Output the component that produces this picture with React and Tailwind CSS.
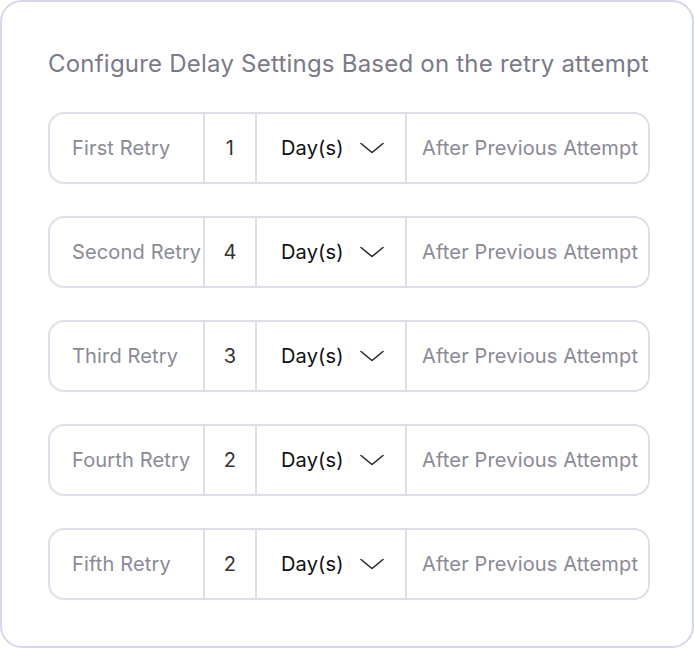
import React from "react";

const retries = [
  { label: "First Retry", value: 1 },
  { label: "Second Retry", value: 4 },
  { label: "Third Retry", value: 3 },
  { label: "Fourth Retry", value: 2 },
  { label: "Fifth Retry", value: 2 },
];

function Chevron() {
  return (
    <svg width="24" height="12" viewBox="0 0 24 12" fill="none">
      <path d="M1 1.5L12 10.5L23 1.5" stroke="#222" strokeWidth="1.5" strokeLinecap="round" strokeLinejoin="round" />
    </svg>
  );
}

export default function App() {
  return (
    <div className="w-[694px] h-[648px] bg-white" style={{ fontFamily: "Inter, 'Noto Sans', sans-serif" }}>
      <div className="w-full h-full border-2 border-[#d6d6f0] rounded-[22px] px-[46px] pt-[46px]">
        <h2 className="text-[24px] leading-[32px] text-[#7a7a88] tracking-[0.22px] whitespace-nowrap">
          Configure Delay Settings Based on the retry attempt
        </h2>
        <div className="mt-[32px] flex flex-col gap-[32px]">
          {retries.map((r) => (
            <div
              key={r.label}
              className="flex h-[72px] w-[602px] border-2 border-[#dedeea] rounded-[16px] text-[20px] tracking-[0.15px] items-stretch"
            >
              <div className="w-[155px] flex items-center pl-[22px] text-[#8a8a96] border-r-2 border-[#dedeea] whitespace-nowrap">
                {r.label}
              </div>
              <div className="w-[52px] flex items-center justify-center text-[#333] border-r-2 border-[#dedeea]">
                {r.value}
              </div>
              <div className="w-[150px] flex items-center justify-between pl-[24px] pr-[21px] text-[#111] border-r-2 border-[#dedeea]">
                <span>Day(s)</span>
                <Chevron />
              </div>
              <div className="flex-1 flex items-center pl-[15px] text-[#8a8a96] whitespace-nowrap">
                After Previous Attempt
              </div>
            </div>
          ))}
        </div>
      </div>
    </div>
  );
}
